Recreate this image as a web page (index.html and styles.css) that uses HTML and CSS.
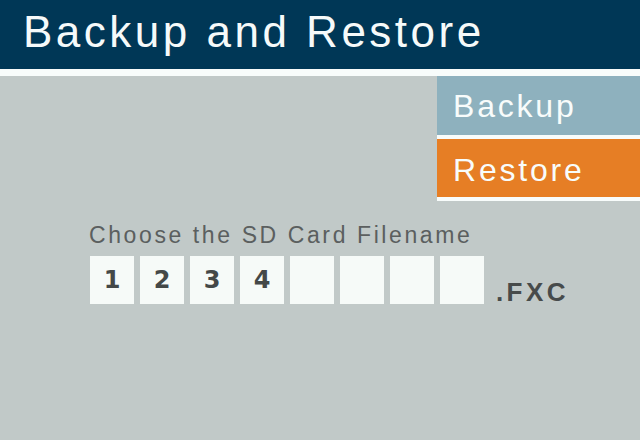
FILE: index.html
```html
<!DOCTYPE html>
<html lang="en">
<head>
    <meta charset="UTF-8">
    <meta name="viewport" content="width=device-width, initial-scale=1.0">
    <title>Backup and Restore</title>
    <link rel="stylesheet" href="styles.css">
</head>
<body>
    <div class="header">Backup and Restore</div>
    <div class="divider"></div>

    <div class="menu">
        <div class="menuItem backup">Backup</div>
        <div class="menuItem restore">Restore</div>
    </div>

    <div class="filename">
        <p class="label">Choose the SD Card Filename</p>
        <div class="row">
            <div class="digit">1</div>
            <div class="digit">2</div>
            <div class="digit">3</div>
            <div class="digit">4</div>
            <div class="digit"></div>
            <div class="digit"></div>
            <div class="digit"></div>
            <div class="digit"></div>
            <span class="ext">.FXC</span>
        </div>
    </div>
</body>
</html>
```
FILE: styles.css
```css
body {
    font-family: "Liberation Sans", Arial, sans-serif;
    background-color: #c1c9c8;
    margin: 0;
}
.header {
    height: 69px;
    line-height: 64px;
    padding-left: 23px;
    background-color: #003756;
    color: #f6fafa;
    font-size: 44px;
    letter-spacing: 3.5px;
}
.divider {
    height: 7px;
    background-color: #f8fcfb;
}
.menu {
    margin-left: 437px;
}
.menuItem {
    padding-left: 16px;
    color: #f8fcfb;
    font-size: 32px;
    letter-spacing: 2.8px;
    border-bottom: 4px solid #f8fcfb;
}
.backup {
    background-color: #8eb1be;
    padding-top: 2px;
    line-height: 57px;
}
.restore {
    background-color: #e67e25;
    padding-top: 4px;
    line-height: 54px;
}
.filename {
    padding-left: 90px;
    margin-top: 20px;
}
.label {
    margin: 0 0 7px -1px;
    font-size: 23px;
    line-height: 28px;
    letter-spacing: 2.6px;
    color: #5b5f5f;
}
.row {
    display: flex;
    align-items: flex-end;
    gap: 6px;
}
.digit {
    width: 44px;
    height: 48px;
    line-height: 48px;
    text-align: center;
    background-color: #f6faf8;
    font-family: "DejaVu Sans", sans-serif;
    font-weight: bold;
    font-size: 24px;
    color: #444848;
}
.ext {
    margin-left: 6px;
    margin-bottom: -1px;
    font-weight: bold;
    font-size: 26px;
    line-height: 26px;
    letter-spacing: 3.4px;
    color: #474b4b;
}
```
